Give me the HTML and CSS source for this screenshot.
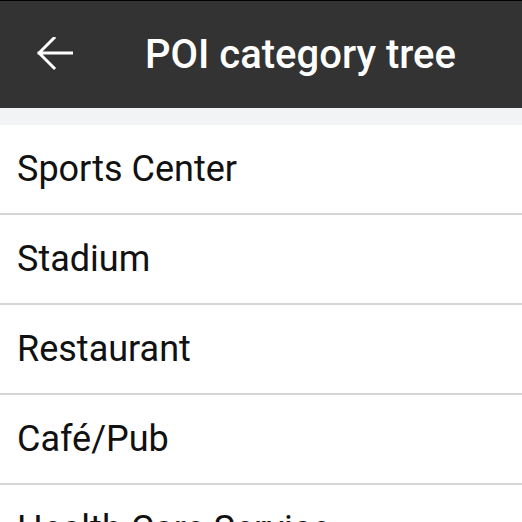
FILE: index.html
```html
<!DOCTYPE html>
<html>
<head>
<meta charset="utf-8">
<link rel="stylesheet" href="styles.css">
</head>
<body>
<div class="app">
  <header class="toolbar">
    <button class="back" aria-label="Back">
      <svg width="36" height="34" viewBox="0 0 36 34">
        <path d="M2 16 H35 M17 1 L2 16 L17 31" fill="none" stroke="#fff" stroke-width="3" stroke-linecap="square" stroke-linejoin="miter"/>
      </svg>
    </button>
    <h1 class="title">POI category tree</h1>
  </header>
  <div class="spacer"></div>
  <ul class="list">
    <li class="item">Sports Center</li>
    <li class="item">Stadium</li>
    <li class="item">Restaurant</li>
    <li class="item">Café/Pub</li>
    <li class="item">Health Care Service</li>
  </ul>
</div>
</body>
</html>
```
FILE: styles.css
```css
html, body {
  margin: 0;
  padding: 0;
  background: #ffffff;
}
body {
  font-family: Roboto, "Noto Sans", sans-serif;
  overflow: hidden;
  height: 522px;
}
.app {
  display: flex;
  flex-direction: column;
}
.toolbar {
  height: 107px;
  border-top: 1px solid #000;
  background: #333333;
  display: flex;
  align-items: center;
  box-sizing: content-box;
}
.back {
  background: none;
  border: 0;
  padding: 0;
  margin: 0 0 0 37px;
  width: 36px;
  height: 34px;
  display: flex;
  margin-top: -1px;
}
.title {
  margin: 0 0 0 72px;
  color: #ffffff;
  font-size: 40px;
  font-weight: 500;
  letter-spacing: 0;
  margin-top: 0;
}
.spacer {
  height: 17px;
  background: #f2f3f5;
}
.list {
  list-style: none;
  margin: 0;
  padding: 0;
}
.item {
  height: 88px;
  border-bottom: 2px solid #d6d6d6;
  padding-left: 17px;
  display: flex;
  align-items: center;
  font-size: 36px;
  color: #111111;
  white-space: nowrap;
  overflow: hidden;
}
```
